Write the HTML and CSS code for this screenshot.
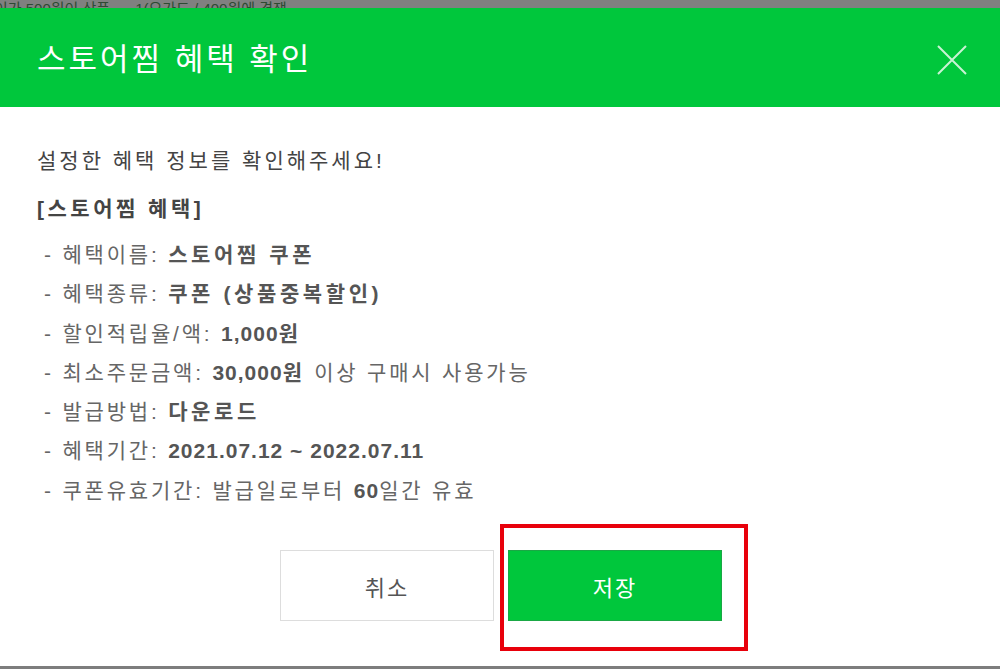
FILE: index.html
```html
<!DOCTYPE html>
<html lang="ko">

<head>
  <meta charset="UTF-8" />
  <meta name="viewport" content="width=device-width, initial-scale=1.0" />
  <link rel="stylesheet" href="styles.css">
  <title>스토어찜 혜택 확인</title>
</head>

<body>
  <!-- 뒤쪽 페이지 (잘린 부분) -->
  <div class="backdrop">
    <span>이가 500원이 상품 &nbsp;&nbsp;&nbsp;&nbsp; 1(요가드 / 400원에 경쟁</span>
  </div>

  <div class="modal">
    <div class="modal-head">
      <h2>스토어찜 혜택 확인</h2>
      <button class="close" type="button" aria-label="닫기">
        <svg width="32" height="32" viewBox="0 0 32 32">
          <path d="M2 2 L30 30 M30 2 L2 30" stroke="#c9f3d4" stroke-width="2" fill="none" />
        </svg>
      </button>
    </div>

    <div class="modal-body">
      <p class="intro">설정한 혜택 정보를 확인해주세요!</p>
      <h3>[스토어찜 혜택]</h3>
      <ul class="info">
        <li>- 혜택이름: <b>스토어찜 쿠폰</b></li>
        <li>- 혜택종류: <b>쿠폰 (상품중복할인)</b></li>
        <li>- 할인적립율/액: <b><span class="num">1,000</span>원</b></li>
        <li>- 최소주문금액: <b><span class="num">30,000</span>원</b> 이상 구매시 사용가능</li>
        <li>- 발급방법: <b>다운로드</b></li>
        <li>- 혜택기간: <b class="num">2021.07.12 ~ 2022.07.11</b></li>
        <li>- 쿠폰유효기간: 발급일로부터 <b class="num">60</b>일간 유효</li>
      </ul>
    </div>

    <div class="modal-foot">
      <button class="btn btn-cancel" type="button">취소</button>
      <div class="mark">
        <button class="btn btn-save" type="button">저장</button>
      </div>
    </div>
  </div>

  <div class="bottom-line"></div>
</body>

</html>
```

FILE: styles.css
```css
:root {
  --green: #00c73c;
  --text: #555;
}

* {
  box-sizing: border-box;
}

body {
  margin: 0;
  background-color: #fff;
  font-family: "Liberation Sans", "Noto Sans CJK KR", sans-serif;
  color: var(--text);
  height: 669px;
  overflow: hidden;
  display: flex;
  flex-direction: column;
}

/* 뒤 화면 */
.backdrop {
  height: 8px;
  background-color: #808080;
  overflow: hidden;
  display: flex;
  align-items: flex-end;
}

.backdrop span {
  font-size: 15px;
  line-height: 15px;
  margin-bottom: -8px;
  margin-left: -6px;
  color: #2e4a33;
  white-space: nowrap;
}

.modal {
  flex: 1;
  display: flex;
  flex-direction: column;
}

.modal-head {
  height: 99px;
  background-color: var(--green);
  display: flex;
  align-items: center;
  justify-content: space-between;
  padding: 0 32px 0 37px;
}

.modal-head h2 {
  margin: 0 0 2px;
  color: #fff;
  font-size: 31px;
  font-weight: 400;
  letter-spacing: 3px;
}

.close {
  background: none;
  border: 0;
  padding: 0;
  width: 32px;
  height: 32px;
  cursor: pointer;
  margin-top: 4px;
}

.modal-body {
  padding: 40px 37px 0;
}

.intro {
  margin: 0;
  font-size: 21px;
  line-height: 28px;
  letter-spacing: 3px;
  color: #444;
}

.modal-body h3 {
  margin: 20px 0 0;
  font-size: 21px;
  line-height: 28px;
  letter-spacing: 3.5px;
  color: #444;
}

.info {
  list-style: none;
  margin: 12px 0 0;
  padding: 0 0 0 7px;
}

.info li {
  font-size: 21px;
  line-height: 39.3px;
  letter-spacing: 2.8px;
  color: #666;
}

.info b {
  letter-spacing: 3.6px;
  color: #555;
}

/* 숫자는 자간이 좁다 */
.info .num {
  letter-spacing: 1px;
}

.modal-foot {
  display: flex;
  justify-content: center;
  gap: 14px;
  margin-top: 40px;
  padding-left: 2px;
}

.btn {
  width: 214px;
  height: 71px;
  font-family: inherit;
  font-size: 22px;
  letter-spacing: 2px;
  cursor: pointer;
}

.btn-cancel {
  background-color: #fff;
  border: 1px solid #ddd;
  color: #555;
}

.btn-save {
  background-color: var(--green);
  border: 1px solid #1aa845;
  color: #fff;
}

/* 빨간 강조 박스 */
.mark {
  position: relative;
}

.mark::after {
  content: "";
  position: absolute;
  left: -8px;
  top: -26px;
  width: 240px;
  height: 119px;
  border: 4px solid #e8000b;
  pointer-events: none;
}

.bottom-line {
  height: 3px;
  background-color: #7d7d7d;
}
```
